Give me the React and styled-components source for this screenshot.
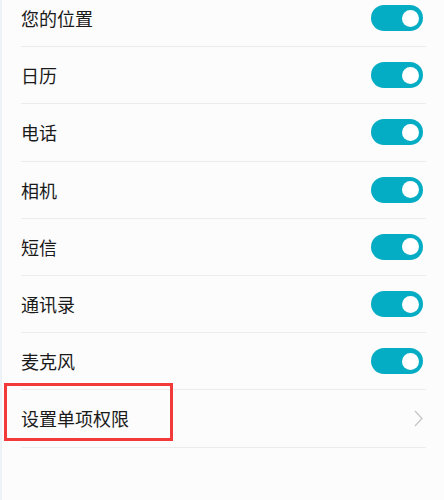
import styled, { createGlobalStyle } from "styled-components";

const GlobalStyle = createGlobalStyle`
  html, body {
    margin: 0;
    padding: 0;
    background: #fcfcfc;
  }
  body {
    font-family: "Noto Sans CJK SC", "Noto Sans", sans-serif;
    overflow: hidden;
  }
`;

const Page = styled.div`
  height: 500px;
  background: #fcfcfc;
  border-left: 2px solid #edf2f9;
  overflow: hidden;
`;

const List = styled.div`
  margin-top: -10px;
  padding: 0 18px 0 19px;
`;

const Row = styled.div`
  position: relative;
  box-sizing: border-box;
  height: 57.2px;
  display: flex;
  align-items: center;
  justify-content: space-between;
  padding-right: 3px;
  border-bottom: 1px solid #ececec;
`;

const Label = styled.span`
  font-size: 18px;
  color: #1a1a1a;
  line-height: 1;
`;

const Switch = styled.div`
  position: relative;
  width: 52px;
  height: 26px;
  border-radius: 13px;
  background: ${(p) => (p.on ? "#05adc4" : "#cfcfcf")};
`;

const Knob = styled.span`
  position: absolute;
  top: 4.5px;
  right: 4px;
  width: 17px;
  height: 17px;
  border-radius: 50%;
  background: #fff;
`;

const Highlight = styled.div`
  position: absolute;
  left: -17px;
  top: -7px;
  width: 169px;
  height: 58px;
  box-sizing: border-box;
  border: 3px solid #f23a3a;
  pointer-events: none;
`;

const Chevron = () => (
  <svg width="9" height="17" viewBox="0 0 9 17">
    <polyline
      points="1,1 8,8.5 1,16"
      fill="none"
      stroke="#c8c8c8"
      strokeWidth="1.4"
    />
  </svg>
);

const items = ["您的位置", "日历", "电话", "相机", "短信", "通讯录", "麦克风"];

export default function App() {
  return (
    <Page>
      <GlobalStyle />
      <List>
        {items.map((name) => (
          <Row key={name}>
            <Label>{name}</Label>
            <Switch on>
              <Knob />
            </Switch>
          </Row>
        ))}
        <Row>
          <Highlight />
          <Label>设置单项权限</Label>
          <Chevron />
        </Row>
      </List>
    </Page>
  );
}
